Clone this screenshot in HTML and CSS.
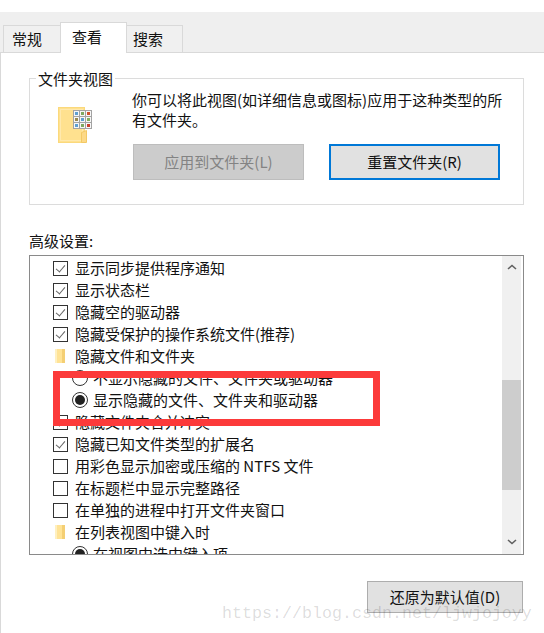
FILE: index.html
```html
<!DOCTYPE html>
<html lang="zh-CN">
<head>
    <meta charset="UTF-8">
    <title>文件夹选项</title>
    <link rel="stylesheet" href="styles.css">
</head>
<body>
    <div class="tabs">
        <div class="tab">常规</div>
        <div class="tab active">查看</div>
        <div class="tab last">搜索</div>
    </div>

    <div class="panel">
        <div class="group">
            <div class="group-title">文件夹视图</div>
            <div class="group-body">
                <svg class="big-folder" width="36" height="37" viewBox="0 0 36 37">
                    <rect x="0.5" y="0.5" width="26" height="35" fill="#ffe18f" stroke="#fbd97c"/>
                    <rect x="2.5" y="2.5" width="22" height="31" fill="none" stroke="#ffe9ae"/>
                    <path d="M23.5 25.5L28.5 23.5V35.5H23.5Z" fill="#fdd987" stroke="#f3c965"/>
                    <rect x="15" y="3" width="19" height="19" fill="#a3a3a3"/>
                    <rect x="16" y="4" width="5" height="5" fill="#f7f7f7"/>
                    <rect x="22" y="4" width="5" height="5" fill="#f7f7f7"/>
                    <rect x="28" y="4" width="5" height="5" fill="#f7f7f7"/>
                    <rect x="16" y="10" width="5" height="5" fill="#f7f7f7"/>
                    <rect x="22" y="10" width="5" height="5" fill="#f7f7f7"/>
                    <rect x="28" y="10" width="5" height="5" fill="#f7f7f7"/>
                    <rect x="16" y="16" width="5" height="5" fill="#f7f7f7"/>
                    <rect x="22" y="16" width="5" height="5" fill="#f7f7f7"/>
                    <rect x="28" y="16" width="5" height="5" fill="#f7f7f7"/>
                    <rect x="17" y="5" width="3" height="3" fill="#5f9fd0"/>
                    <rect x="23" y="5" width="3" height="3" fill="#7fa860"/>
                    <rect x="29" y="5" width="3" height="3" fill="#d0522e"/>
                    <rect x="17" y="11" width="3" height="3" fill="#9a8a50"/>
                    <rect x="23" y="11" width="3" height="3" fill="#5f9fd0"/>
                    <rect x="29" y="11" width="3" height="3" fill="#86ad60"/>
                    <rect x="17" y="17" width="3" height="3" fill="#5f9fd0"/>
                    <rect x="23" y="17" width="3" height="3" fill="#7fa860"/>
                    <rect x="29" y="17" width="3" height="3" fill="#c8402e"/>
                </svg>
                <div class="group-main">
                    <p class="group-text">你可以将此视图(如详细信息或图标)应用于这种类型的所有文件夹。</p>
                    <div class="group-buttons">
                        <div class="btn disabled">应用到文件夹(L)</div>
                        <div class="btn focused">重置文件夹(R)</div>
                    </div>
                </div>
            </div>
        </div>

        <div class="list-label">高级设置:</div>
        <div class="list">
            <div class="rows">
                <div class="row"><span class="check on"></span>显示同步提供程序通知</div>
                <div class="row"><span class="check on"></span>显示状态栏</div>
                <div class="row"><span class="check on"></span>隐藏空的驱动器</div>
                <div class="row"><span class="check on"></span>隐藏受保护的操作系统文件(推荐)</div>
                <div class="row"><span class="tree-folder"></span>隐藏文件和文件夹</div>
                <div class="row sub"><span class="radio"></span>不显示隐藏的文件、文件夹或驱动器</div>
                <div class="row sub"><span class="radio on"></span>显示隐藏的文件、文件夹和驱动器</div>
                <div class="row"><span class="check on"></span>隐藏文件夹合并冲突</div>
                <div class="row"><span class="check on"></span>隐藏已知文件类型的扩展名</div>
                <div class="row"><span class="check"></span>用彩色显示加密或压缩的 NTFS 文件</div>
                <div class="row"><span class="check"></span>在标题栏中显示完整路径</div>
                <div class="row"><span class="check"></span>在单独的进程中打开文件夹窗口</div>
                <div class="row"><span class="tree-folder"></span>在列表视图中键入时</div>
                <div class="row sub"><span class="radio on"></span>在视图中选中键入项</div>
            </div>
            <div class="scrollbar">
                <svg class="arrow" width="10" height="6" viewBox="0 0 10 6"><path d="M1 5L5 1.5L9 5" fill="none" stroke="#606060" stroke-width="1.6"/></svg>
                <div class="thumb"></div>
                <svg class="arrow" width="10" height="6" viewBox="0 0 10 6"><path d="M1 1L5 4.5L9 1" fill="none" stroke="#606060" stroke-width="1.6"/></svg>
            </div>
        </div>

        <div class="footer">
            <div class="btn restore">还原为默认值(D)</div>
        </div>
    </div>

    <!-- annotation and watermark sit on top of the screenshot -->
    <div class="red-box"></div>
    <div class="watermark">https://blog.csdn.net/ljwjojoyy</div>
</body>
</html>
```

FILE: styles.css
```css
html, body {
    margin: 0;
    padding: 0;
}
body {
    position: relative;
    box-sizing: border-box;
    display: flex;
    flex-direction: column;
    width: 544px;
    height: 633px;
    padding-top: 12px;
    overflow: hidden;
    background: #fff;
    color: #111;
    font-family: "Noto Sans CJK SC", "Liberation Sans", sans-serif;
    font-size: 15px;
    line-height: 20px;
}
.tabs {
    display: flex;
    flex: none;
    align-items: flex-end;
    height: 41px;
    box-sizing: border-box;
    padding-left: 3px;
    background: #efefef;
    border-bottom: 1px solid #d9d9d9;
}
.tab {
    box-sizing: border-box;
    width: 58px;
    height: 27px;
    padding: 3px 0 0 8px;
    background: #f0f0f0;
    border: 1px solid #d9d9d9;
    border-bottom: none;
    margin-right: -1px;
}
.tab.active {
    position: relative;
    width: 67px;
    height: 31px;
    margin-bottom: -1px;
    padding: 4px 0 0 11px;
    background: #fff;
}
.tab.last {
    width: 57px;
    padding-left: 6px;
}
.panel {
    flex: 1;
    padding: 0 20px 0 28px;
    border-left: 1px solid #d9d9d9;
}
.group {
    box-sizing: border-box;
    width: 495px;
    height: 127px;
    margin-top: 25px;
    border: 1px solid #dcdcdc;
}
.group-title {
    width: fit-content;
    margin: -10px 0 0 6px;
    padding: 0 2px;
    background: #fff;
}
.group-body {
    display: flex;
}
.big-folder {
    flex: none;
    margin: 18px 0 0 28px;
}
.group-main {
    margin-left: 38px;
}
.group-text {
    width: 380px;
    margin: 1px 0 0 0;
}
.group-buttons {
    display: flex;
    gap: 25px;
    margin: 14px 0 0 1px;
}
.btn {
    box-sizing: border-box;
    display: flex;
    align-items: center;
    justify-content: center;
    width: 171px;
    height: 36px;
    background: #e1e1e1;
    border: 1px solid #adadad;
}
.btn.disabled {
    background: #ccc;
    border-color: #bdbdbd;
    color: #838383;
}
.btn.focused {
    border: 2px solid #0078d7;
}
.list-label {
    margin-top: 26px;
    height: 24px;
}
.list {
    box-sizing: border-box;
    display: flex;
    width: 495px;
    height: 300px;
    border: 1px solid #8a8a8a;
    overflow: hidden;
}
.rows {
    flex: 1;
    padding-top: 1px;
}
.row {
    display: flex;
    align-items: center;
    height: 22px;
    padding-left: 23px;
    white-space: nowrap;
}
.row.sub {
    padding-left: 42px;
}
.check {
    box-sizing: border-box;
    position: relative;
    flex: none;
    width: 15px;
    height: 15px;
    margin-right: 7px;
    border: 1px solid #333;
    background: #fff;
}
.check.on::after {
    content: "";
    position: absolute;
    left: 4px;
    top: 1px;
    width: 4px;
    height: 8px;
    border: solid #666;
    border-width: 0 1px 1px 0;
    transform: rotate(40deg);
}
.radio {
    box-sizing: border-box;
    position: relative;
    flex: none;
    width: 16px;
    height: 16px;
    margin-right: 5px;
    border: 1px solid #333;
    border-radius: 50%;
    background: #fff;
}
.radio.on::after {
    content: "";
    position: absolute;
    left: 2px;
    top: 2px;
    width: 10px;
    height: 10px;
    border-radius: 50%;
    background: #222;
}
.tree-folder {
    box-sizing: border-box;
    flex: none;
    width: 10px;
    height: 14px;
    margin: 0 10px 0 2px;
    background: linear-gradient(90deg, #fff0c0 0 20%, #ffe396 20% 70%, #f4cf74 70% 100%);
}
.scrollbar {
    display: flex;
    flex-direction: column;
    align-items: center;
    flex: none;
    width: 19px;
    margin-right: 2px;
    background: #f0f0f0;
}
.arrow {
    flex: none;
    margin-top: 8px;
}
.thumb {
    width: 100%;
    height: 110px;
    margin: 110px 0 41px;
    flex: none;
    background: #cdcdcd;
}
.footer {
    display: flex;
    justify-content: flex-end;
    width: 494px;
    margin-top: 26px;
}
.btn.restore {
    width: 156px;
    height: 32px;
}
.red-box {
    position: absolute;
    left: 53px;
    top: 371px;
    width: 327px;
    height: 55px;
    box-sizing: border-box;
    border: 7px solid #fc3a3a;
}
.watermark {
    position: absolute;
    left: 222px;
    top: 604px;
    font-family: "Liberation Mono", monospace;
    font-size: 16.67px;
    line-height: 20px;
    color: rgba(0, 0, 0, 0.14);
    white-space: nowrap;
}
```
